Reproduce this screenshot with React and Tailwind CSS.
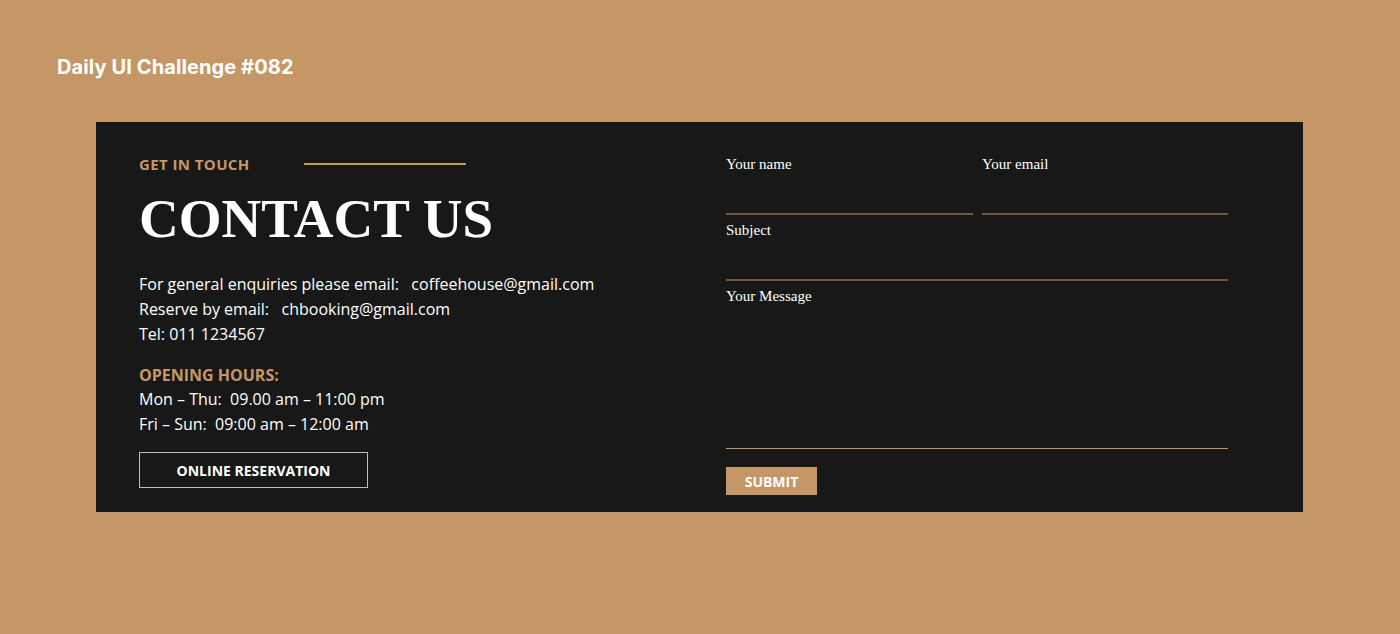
import React from "react";

const body = "font-['Open_Sans','Liberation_Sans',sans-serif]";
const serif = "font-['Liberation_Serif','Times_New_Roman',serif]";

function Field({ label, className = "" }) {
  return (
    <label className={`flex flex-col ${className}`}>
      <span className={`${serif} text-[15px] leading-[18px] text-white`}>{label}</span>
      <input type="text" className="h-[42px] bg-transparent border-b-2 border-[#74583a] outline-none text-white" />
    </label>
  );
}

export default function App() {
  return (
    <div className="min-h-screen h-[634px] bg-[#c69766] overflow-hidden">
      <h1 className="pt-[55px] pl-[57px] font-['Inter',sans-serif] font-bold text-[20px] leading-[25px] tracking-[0.1px] text-white">
        Daily UI Challenge #082
      </h1>

      <div className="mt-[42px] ml-[96px] w-[1207px] h-[390px] bg-[#181818] flex pl-[43px] pt-[33px]">

        <div className="w-[587px] flex flex-col">
          <div className="flex items-center">
            <span className={`${body} font-bold text-[15px] leading-[18px] tracking-[0.4px] text-[#c69766]`}>GET IN TOUCH</span>
            <span className="ml-[54px] w-[162px] h-[2px] bg-[#c69766]"></span>
          </div>

          <h2 className={`${serif} font-bold text-[55px] leading-[60px] text-white mt-[16px]`}>CONTACT US</h2>

          <div className={`${body} text-[16px] leading-[25px] text-white mt-[23px]`}>
            <p>For general enquiries please email:&nbsp;&nbsp; coffeehouse@gmail.com</p>
            <p>Reserve by email:&nbsp;&nbsp; chbooking@gmail.com</p>
            <p>Tel: 011 1234567</p>
          </div>

          <div className={`${body} text-[16px] leading-[25px] text-white mt-[16px]`}>
            <p className="font-bold text-[#c69766] -mb-[1px]">OPENING HOURS:</p>
            <p>Mon – Thu:&nbsp; 09.00 am – 11:00 pm</p>
            <p>Fri – Sun:&nbsp; 09:00 am – 12:00 am</p>
          </div>

          <button className={`${body} mt-[15px] w-[229px] h-[36px] border border-[#bdbdbd] text-white font-bold text-[14px]`}>
            ONLINE RESERVATION
          </button>
        </div>

        <form className="w-[502px] flex flex-col" onSubmit={(e) => e.preventDefault()}>
          <div className="flex gap-[9px]">
            <Field label="Your name" className="w-[247px]" />
            <Field label="Your email" className="w-[246px]" />
          </div>
          <Field label="Subject" className="mt-[6px]" />
          <label className="flex flex-col mt-[6px]">
            <span className={`${serif} text-[15px] leading-[18px] text-white`}>Your Message</span>
            <textarea className="h-[144px] resize-none bg-transparent border-b border-[#c69766] outline-none text-white" />
          </label>
          <button type="submit" className={`${body} mt-[18px] w-[91px] h-[28px] bg-[#c69766] text-white font-bold text-[14px]`}>
            SUBMIT
          </button>
        </form>

      </div>
    </div>
  );
}
